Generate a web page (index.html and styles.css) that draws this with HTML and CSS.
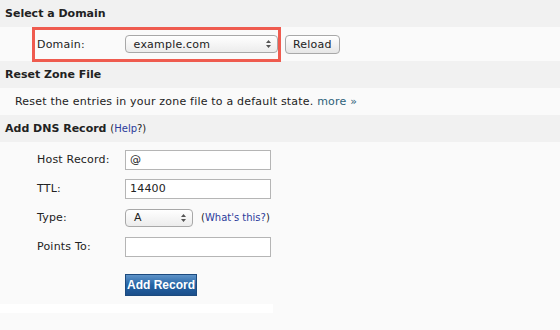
FILE: index.html
```html
<!DOCTYPE html>
<html lang="en">
<head>
  <meta charset="UTF-8" />
  <title>DNS Settings</title>
  <link rel="stylesheet" href="styles.css">
</head>
<body>

<h2 class="section-title">Select a Domain</h2>
<div class="row">
  <div class="domain-box">
    <label class="label">Domain:</label>
    <span class="select wide">example.com
      <svg class="arrows" width="5" height="8" viewBox="0 0 5 8"><path d="M0 3 L2.5 0 L5 3 Z M0 5 L2.5 8 L5 5 Z" fill="#555"/></svg>
    </span>
  </div>
  <button class="btn">Reload</button>
</div>

<h2 class="section-title">Reset Zone File</h2>
<div class="row text-row">
  <span>Reset the entries in your zone file to a default state. <a href="#" class="more">more &raquo;</a></span>
</div>

<h2 class="section-title">Add DNS Record <span class="help">(<a href="#">Help</a>?)</span></h2>
<div class="form">
  <div class="field">
    <label class="label">Host Record:</label>
    <input type="text" value="@">
  </div>
  <div class="field">
    <label class="label">TTL:</label>
    <input type="text" value="14400">
  </div>
  <div class="field">
    <label class="label">Type:</label>
    <span class="select small">A
      <svg class="arrows" width="5" height="8" viewBox="0 0 5 8"><path d="M0 3 L2.5 0 L5 3 Z M0 5 L2.5 8 L5 5 Z" fill="#555"/></svg>
    </span>
    <span class="help">(<a href="#">What's this?</a>)</span>
  </div>
  <div class="field">
    <label class="label">Points To:</label>
    <input type="text" value="">
  </div>
  <div class="field">
    <span class="label"></span>
    <button class="add-btn">Add Record</button>
  </div>
</div>
<div class="footer-strip"></div>

</body>
</html>
```

FILE: styles.css
```css
body {
  margin: 0;
  background: #fafafa;
  font-family: "DejaVu Sans", Verdana, sans-serif;
  font-size: 11px;
  letter-spacing: 0.2px;
  color: #222;
}

.section-title {
  margin: 0;
  height: 27px;
  line-height: 27px;
  padding-left: 5px;
  font-size: 11px;
  font-weight: bold;
  letter-spacing: 0;
  background: #f1f1f1;
  color: #222;
}

.section-title .help {
  font-weight: normal;
}

.help a {
  color: #2b3b9b;
  text-decoration: none;
}

.help {
  font-size: 10px;
  letter-spacing: 0;
  color: #222;
}

.row {
  display: flex;
  align-items: center;
  height: 34px;
}

.domain-box {
  display: flex;
  align-items: center;
  margin-left: 32px;
  height: 29px;
  width: 241px;
  padding-left: 2px;
  border: 3px solid #ef5b4f;
}

.label {
  width: 88px;
  display: inline-block;
}

.select {
  display: inline-flex;
  justify-content: space-between;
  align-items: center;
  height: 16px;
  padding: 0 6px 0 8px;
  border: 1px solid #a8a8a8;
  border-radius: 4px;
  background: linear-gradient(#ffffff, #ececec);
  font-size: 11px;
}

.select.wide {
  width: 138px;
}

.select.small {
  width: 52px;
  margin-right: 8px;
}

.btn {
  margin-left: 4px;
  height: 19px;
  padding: 0 7px;
  font-family: "DejaVu Sans", Verdana, sans-serif;
  font-size: 11px;
  letter-spacing: 0.2px;
  border: 1px solid #a8a8a8;
  border-radius: 4px;
  background: linear-gradient(#ffffff, #e6e6e6);
  color: #222;
}

.text-row {
  height: 27px;
  padding-left: 15px;
}

.more {
  color: #2c6079;
  text-decoration: none;
}

.form {
  padding: 3px 0 0 37px;
  height: 159px;
}

.field {
  display: flex;
  align-items: center;
  height: 29px;
}

.field input {
  width: 136px;
  height: 14px;
  padding: 2px 4px;
  border: 1px solid #b5b5b5;
  background: #fff;
  font-family: "DejaVu Sans", Verdana, sans-serif;
  font-size: 11px;
  letter-spacing: 0.2px;
  color: #222;
}

.add-btn {
  margin-top: 19px;
  width: 72px;
  height: 22px;
  padding: 0;
  font-family: "Liberation Sans", Arial, sans-serif;
  font-size: 12px;
  font-weight: bold;
  color: #fff;
  border: 1px solid #1c4a7e;
  background: linear-gradient(#5e93c8, #2463a4 50%, #1b4f8b);
}

.footer-strip {
  width: 273px;
  height: 9px;
  background: #fff;
}
```
